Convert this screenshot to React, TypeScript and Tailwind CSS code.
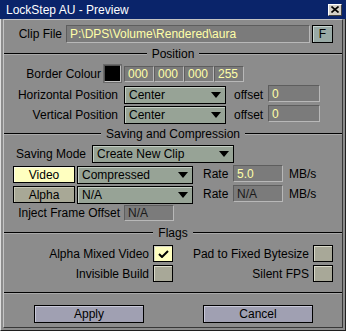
import React from "react";

const Field = ({ w, h = 17, text, dim = false }: { w: string; h?: number; text: string; dim?: boolean }) => (
  <div
    className={`${w} ${h === 16 ? "h-[16px]" : h === 18 ? "h-[18px]" : "h-[17px]"} bg-[#7b7b7b] border border-t-[#5e5e5e] border-l-[#5e5e5e] border-b-[#b8b8b8] border-r-[#b8b8b8] flex items-center pl-[3px] leading-none ${dim ? "text-[#1a1a1a]" : "text-[#ffffa8]"}`}
  >
    {text}
  </div>
);

const Arrow = () => (
  <svg width="10" height="6" viewBox="0 0 10 6" className="shrink-0">
    <polygon points="0,0 10,0 5,6" fill="#000" />
  </svg>
);

const Dropdown = ({ w, text }: { w: string; text: string }) => (
  <div className={`${w} h-[18px] bg-[#97a396] border border-black shadow-[inset_1px_1px_0_#c4cec4] flex items-center justify-between pl-[4px] pr-[4px] leading-none`}>
    <span>{text}</span>
    <Arrow />
  </div>
);

const Sep = ({ label }: { label: string }) => (
  <div className="h-[14px] flex items-center">
    <div className="flex-1 h-[2px] border-t border-t-black border-b border-b-[#a8a8a8]" />
    <div className="px-[5px] leading-none">{label}</div>
    <div className="flex-1 h-[2px] border-t border-t-black border-b border-b-[#a8a8a8]" />
  </div>
);

const Check = ({ checked }: { checked?: boolean }) => (
  <div
    className={`w-[20px] h-[17px] border border-black shadow-[inset_1px_1px_0_#d8d8c8] flex items-center justify-center ${checked ? "bg-[#ffffc0]" : "bg-[#a8a898]"}`}
  >
    {checked && (
      <svg width="11" height="8" viewBox="0 0 11 8">
        <polyline points="1,4 4,7 10,1" fill="none" stroke="#000" strokeWidth="2" />
      </svg>
    )}
  </div>
);

export default function App() {
  return (
    <div className="w-[346px] h-[331px] bg-[#8c8c8c] flex flex-col font-['Liberation_Sans',Arial,sans-serif] text-[12px] text-black select-none">
      {/* title bar */}
      <div className="h-[19px] bg-[#0a246a] flex items-center justify-between pl-[6px] pr-[4px] text-white text-[12px] shrink-0">
        <span className="leading-none">LockStep AU - Preview</span>
        <div className="w-[14px] h-[12px] bg-[#d4d0c8] border border-t-white border-l-white border-r-[#404040] border-b-[#404040] flex items-center justify-center">
          <svg width="8" height="7" viewBox="0 0 8 7">
            <path d="M0.5 0.5 L7.5 6.5 M7.5 0.5 L0.5 6.5" stroke="#000" strokeWidth="1.6" />
          </svg>
        </div>
      </div>
      {/* frame */}
      <div className="flex-1 flex flex-col border-l border-l-[#e0e0e0] border-r border-r-[#202020] border-b border-b-[#202020] px-[2px] pb-[2px]">
        <div className="flex-1 flex flex-col border border-t-[#c4c4c4] border-l-[#c4c4c4] border-r-[#383838] border-b-[#383838]">
          {/* Clip File */}
          <div className="mt-[5px] h-[18px] flex items-center">
            <div className="w-[58px] text-right leading-none">Clip File</div>
            <div className="ml-[4px]">
              <Field w="w-[244px]" h={18} text="P:\DPS\Volume\Rendered\aura" />
            </div>
            <div className="ml-[2px] w-[21px] h-[18px] bg-[#99aaa6] border border-black shadow-[inset_1px_1px_0_#c8d4d0] flex items-center justify-center leading-none">
              F
            </div>
          </div>

          <div className="mt-[4px]">
            <Sep label="Position" />
          </div>

          {/* Border colour */}
          <div className="mt-[4px] h-[17px] flex items-center">
            <div className="w-[97px] text-right leading-none">Border Colour</div>
            <div className="ml-[3px] w-[17px] h-[17px] bg-black border border-t-[#505050] border-l-[#505050] border-r-[#c0c0c0] border-b-[#c0c0c0] shadow-[0_0_0_1px_#6a6a6a]" />
            <div className="ml-[3px] flex self-end">
              <Field w="w-[30px]" h={16} text="000" />
              <Field w="w-[30px]" h={16} text="000" />
              <Field w="w-[30px]" h={16} text="000" />
              <Field w="w-[30px]" h={16} text="255" />
            </div>
          </div>

          {/* Horizontal */}
          <div className="mt-[3px] h-[19px] flex items-start">
            <div className="w-[114px] h-[19px] flex items-center justify-end leading-none">Horizontal Position</div>
            <div className="ml-[6px] mt-[1px]">
              <Dropdown w="w-[102px]" text="Center" />
            </div>
            <div className="ml-[8px] w-[34px] h-[19px] flex items-center leading-none">offset</div>
            <Field w="w-[52px]" text="0" />
          </div>

          {/* Vertical */}
          <div className="mt-[1px] h-[19px] flex items-start">
            <div className="w-[114px] h-[19px] flex items-center justify-end leading-none">Vertical Position</div>
            <div className="ml-[6px] mt-[1px]">
              <Dropdown w="w-[102px]" text="Center" />
            </div>
            <div className="ml-[8px] w-[34px] h-[19px] flex items-center leading-none">offset</div>
            <Field w="w-[52px]" text="0" />
          </div>

          <div className="mt-[3px]">
            <Sep label="Saving and Compression" />
          </div>

          {/* Saving mode */}
          <div className="mt-[4px] h-[18px] flex items-center">
            <div className="w-[82px] text-right leading-none">Saving Mode</div>
            <div className="ml-[6px]">
              <Dropdown w="w-[142px]" text="Create New Clip" />
            </div>
          </div>

          {/* Video */}
          <div className="mt-[2px] h-[18px] flex items-start">
            <div className="ml-[9px] mt-[1px] w-[62px] h-[17px] bg-[#ffffc0] border border-black shadow-[inset_1px_1px_0_#ffffe8] flex items-center justify-center leading-none">
              Video
            </div>
            <div className="ml-[2px] mt-[1px]">
              <Dropdown w="w-[116px]" text="Compressed" />
            </div>
            <div className="ml-[10px] w-[30px] h-[18px] flex items-center leading-none">Rate</div>
            <Field w="w-[50px]" text="5.0" />
            <div className="ml-[6px] h-[18px] flex items-center leading-none">MB/s</div>
          </div>

          {/* Alpha */}
          <div className="mt-[2px] h-[18px] flex items-start">
            <div className="ml-[9px] mt-[1px] w-[62px] h-[17px] bg-[#a8a896] border border-black shadow-[inset_1px_1px_0_#c8c8b8] flex items-center justify-center leading-none">
              Alpha
            </div>
            <div className="ml-[2px] mt-[1px]">
              <Dropdown w="w-[116px]" text="N/A" />
            </div>
            <div className="ml-[10px] w-[30px] h-[18px] flex items-center leading-none">Rate</div>
            <Field w="w-[50px]" text="N/A" dim />
            <div className="ml-[6px] h-[18px] flex items-center leading-none">MB/s</div>
          </div>

          {/* Inject */}
          <div className="mt-[2px] h-[16px] flex items-center">
            <div className="w-[116px] text-right leading-none">Inject Frame Offset</div>
            <div className="ml-[4px]">
              <Field w="w-[50px]" h={16} text="N/A" dim />
            </div>
          </div>

          <div className="mt-[5px]">
            <Sep label="Flags" />
          </div>

          {/* Flags */}
          <div className="mt-[5px] h-[17px] flex items-center">
            <div className="w-[145px] text-right leading-none">Alpha Mixed Video</div>
            <div className="ml-[4px]">
              <Check checked />
            </div>
            <div className="w-[136px] text-right leading-none">Pad to Fixed Bytesize</div>
            <div className="ml-[4px]">
              <Check />
            </div>
          </div>
          <div className="mt-[3px] h-[17px] flex items-center">
            <div className="w-[145px] text-right leading-none">Invisible Build</div>
            <div className="ml-[4px]">
              <Check />
            </div>
            <div className="w-[136px] text-right leading-none">Silent FPS</div>
            <div className="ml-[4px]">
              <Check />
            </div>
          </div>

          <div className="mt-[10px] h-[2px] border-t border-t-black border-b border-b-[#a8a8a8]" />

          {/* Buttons */}
          <div className="mt-[11px] h-[18px] flex items-center">
            <div className="ml-[30px] w-[110px] h-[18px] bg-[#a0a0b2] border border-black shadow-[inset_1px_1px_0_#c8c8d8] flex items-center justify-center leading-none">
              Apply
            </div>
            <div className="ml-[59px] w-[110px] h-[18px] bg-[#a0a0b2] border border-black shadow-[inset_1px_1px_0_#c8c8d8] flex items-center justify-center leading-none">
              Cancel
            </div>
          </div>
        </div>
      </div>
    </div>
  );
}
